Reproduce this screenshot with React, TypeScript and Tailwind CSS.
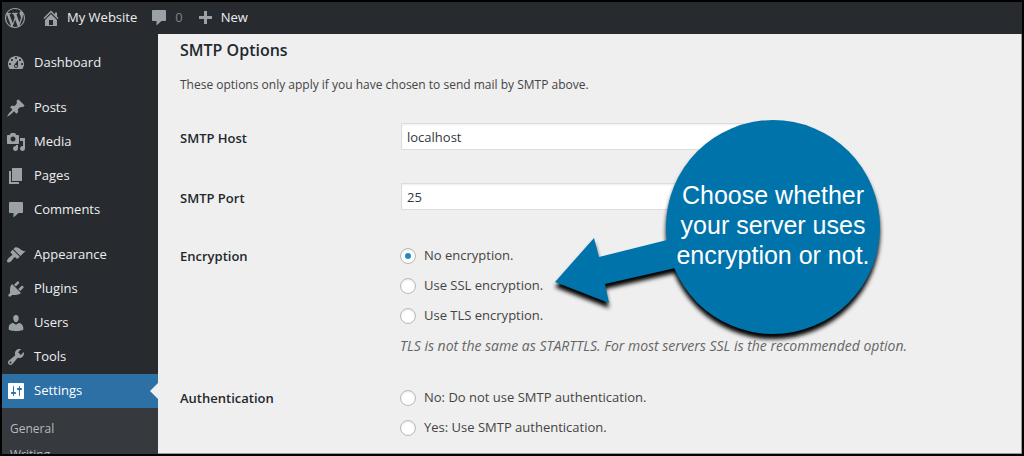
import React, { useState } from 'react';

const ICONS = {
  wordpress:
    'M20 10c0-5.51-4.49-10-10-10C4.48 0 0 4.49 0 10c0 5.52 4.48 10 10 10 5.51 0 10-4.48 10-10zM7.78 15.37L4.37 6.22c.55-.02 1.17-.08 1.17-.08.5-.06.44-1.13-.06-1.11 0 0-1.45.11-2.37.11-.18 0-.37 0-.58-.01C4.12 2.69 6.87 1.11 10 1.11c2.33 0 4.45.87 6.05 2.34-.68-.11-1.65.39-1.65 1.58 0 .74.45 1.36.9 2.1.35.61.55 1.36.55 2.46 0 1.49-1.4 5-1.4 5l-3.03-8.37c.54-.02.82-.17.82-.17.5-.05.44-1.25-.06-1.22 0 0-1.44.12-2.38.12-.87 0-2.33-.12-2.33-.12-.5-.03-.56 1.2-.06 1.22l.92.08 1.26 3.41zM17.41 10c.24-.64.74-1.87.43-4.25.7 1.29 1.05 2.71 1.05 4.25 0 3.29-1.73 6.24-4.4 7.78.97-2.59 1.94-5.2 2.92-7.78zM6.1 18.09C3.12 16.65 1.11 13.53 1.11 10c0-1.3.23-2.48.72-3.59C3.25 10.3 4.67 14.2 6.1 18.09zm4.03-6.63l2.58 6.98c-.86.29-1.76.45-2.71.45-.79 0-1.57-.11-2.29-.33.81-2.38 1.62-4.74 2.42-7.1z',
  home: 'M16 8.5l1.53 1.53-1.06 1.06L10 4.6l-6.47 6.49-1.06-1.06L10 2.5l4 4v-2h2v4zm-6-2.46l6 5.99V18H4v-5.97zM12 17v-5H8v5h4z',
  comment: 'M4 2h12c.55 0 1 .45 1 1v9c0 .55-.45 1-1 1h-3.5L7.5 17.5V13H4c-.55 0-1-.45-1-1V3c0-.55.45-1 1-1z',
  plus: 'M17 8v3h-5v5H9v-5H4V8h5V3h3v5h5z',
  dashboard:
    'M3.76 16h12.48c1.1-1.37 1.76-3.11 1.76-5 0-4.42-3.58-8-8-8s-8 3.58-8 8c0 1.89.66 3.63 1.76 5zM10 4c.55 0 1 .45 1 1s-.45 1-1 1-1-.45-1-1 .45-1 1-1zM6 6c.55 0 1 .45 1 1s-.45 1-1 1-1-.45-1-1 .45-1 1-1zm8 0c.55 0 1 .45 1 1s-.45 1-1 1-1-.45-1-1 .45-1 1-1zm-5.37 5.55L12 7v6c0 1.1-.9 2-2 2s-2-.9-2-2c0-.57.24-1.08.63-1.45zM4 10c.55 0 1 .45 1 1s-.45 1-1 1-1-.45-1-1 .45-1 1-1zm12 0c.55 0 1 .45 1 1s-.45 1-1 1-1-.45-1-1 .45-1 1-1zm-5 3c0-.55-.45-1-1-1s-1 .45-1 1 .45 1 1 1 1-.45 1-1z',
  posts:
    'M10.44 3.02l1.82-1.82 6.36 6.35-1.83 1.82c-1.05-.68-2.48-.57-3.41.36l-.75.75c-.92.93-1.04 2.35-.35 3.41l-1.83 1.82-2.41-2.41-2.8 2.79c-.42.42-3.38 2.71-3.8 2.29s1.86-3.39 2.28-3.81l2.79-2.79L4.1 9.36l1.83-1.82c1.05.69 2.48.57 3.4-.36l.75-.75c.93-.92 1.05-2.35.36-3.41z',
  media:
    'M13 11V4c0-.55-.45-1-1-1h-1.67L9 1H5L3.67 3H2c-.55 0-1 .45-1 1v7c0 .55.45 1 1 1h10c.55 0 1-.45 1-1zM7 4.5c1.38 0 2.5 1.12 2.5 2.5S8.38 9.5 7 9.5 4.5 8.38 4.5 7 5.62 4.5 7 4.5zM14 6h5v10.5c0 1.38-1.12 2.5-2.5 2.5S14 17.88 14 16.5s1.12-2.5 2.5-2.5c.17 0 .34.02.5.05V9h-3V6zm-4 8.05V13h2v3.5c0 1.38-1.12 2.5-2.5 2.5S7 17.88 7 16.5 8.12 14 9.5 14c.17 0 .34.02.5.05z',
  pages: 'M6 15V2h10v13H6zm-1 1h8v2H3V5h2v11z',
  appearance:
    'M14.48 11.06L7.41 3.99l1.5-1.5c.5-.56 2.3-.47 3.51.32 1.21.8 1.43 1.28 2.91 2.1 1.18.64 2.45 1.26 4.45.85zm-.71.71L6.7 4.7 4.93 6.47c-.39.39-.39 1.02 0 1.41l1.06 1.06c.39.39.39 1.03 0 1.42-.6.6-1.43 1.11-2.21 1.69-.35.26-.7.53-1.01.84C1.43 14.23.4 16.08 1.4 17.07c.99 1 2.84-.03 4.18-1.36.31-.31.58-.66.85-1.02.57-.78 1.08-1.61 1.69-2.21.39-.39 1.02-.39 1.41 0l1.06 1.06c.39.39 1.02.39 1.41 0z',
  plugins:
    'M13.11 4.36L9.87 7.6 8 5.73l3.24-3.24c.35-.34 1.05-.2 1.56.32.52.51.66 1.21.31 1.55zm-8 1.77l.91-1.12 9.01 9.01-1.19.84c-.71.71-2.63 1.16-3.82 1.16H6.14L4.9 17.26c-.59.59-1.54.59-2.12 0-.59-.58-.59-1.53 0-2.12l1.24-1.24v-3.88c0-1.13.4-3.19 1.09-3.89zm7.26 3.97l3.24-3.24c.34-.35 1.04-.21 1.55.31.52.51.66 1.21.31 1.55l-3.24 3.25z',
  users:
    'M10 9.25c-2.27 0-2.73-3.44-2.73-3.44C7 4.02 7.82 2 9.97 2c2.16 0 2.98 2.02 2.71 3.81 0 0-.41 3.44-2.68 3.44zm0 2.57L12.72 10c2.39 0 4.52 2.33 4.52 4.53v2.49s-3.65 1.13-7.24 1.13c-3.65 0-7.24-1.13-7.24-1.13v-2.49c0-2.25 1.94-4.48 4.47-4.48z',
  tools:
    'M16.68 9.77c-1.34 1.34-3.3 1.67-4.95.99l-5.41 6.52c-.99.99-2.59.99-3.58 0s-.99-2.59 0-3.57l6.52-5.42c-.68-1.65-.35-3.61.99-4.95 1.28-1.28 3.12-1.62 4.72-1.06l-2.89 2.89 2.82 2.82 2.86-2.87c.53 1.58.18 3.39-1.08 4.65zM3.81 16.21c.4.39 1.04.39 1.43 0 .4-.4.4-1.04 0-1.43-.39-.4-1.03-.4-1.43 0-.39.39-.39 1.03 0 1.43z',
  settings:
    'M18 17V3c0-.55-.45-1-1-1H3c-.55 0-1 .45-1 1v14c0 .55.45 1 1 1h14c.55 0 1-.45 1-1zM8 11h1c.55 0 1 .45 1 1s-.45 1-1 1H8v1.5c0 .28-.22.5-.5.5s-.5-.22-.5-.5V13H6c-.55 0-1-.45-1-1s.45-1 1-1h1V5.5c0-.28.22-.5.5-.5s.5.22.5.5V11zm5-2h-1c-.55 0-1-.45-1-1s.45-1 1-1h1V5.5c0-.28.22-.5.5-.5s.5.22.5.5V7h1c.55 0 1 .45 1 1s-.45 1-1 1h-1v5.5c0 .28-.22.5-.5.5s-.5-.22-.5-.5V9z',
};

type IconName = keyof typeof ICONS;

const Icon: React.FC<{ name: IconName }> = ({ name }) => (
  <svg className="w-5 h-5 shrink-0" viewBox="0 0 20 20" fill="currentColor" aria-hidden="true">
    <path fillRule={name === 'dashboard' ? 'nonzero' : 'evenodd'} d={ICONS[name]} />
  </svg>
);

const MENU: { label: string; icon: IconName }[][] = [
  [{ label: 'Dashboard', icon: 'dashboard' }],
  [
    { label: 'Posts', icon: 'posts' },
    { label: 'Media', icon: 'media' },
    { label: 'Pages', icon: 'pages' },
    { label: 'Comments', icon: 'comment' },
  ],
  [
    { label: 'Appearance', icon: 'appearance' },
    { label: 'Plugins', icon: 'plugins' },
    { label: 'Users', icon: 'users' },
    { label: 'Tools', icon: 'tools' },
    { label: 'Settings', icon: 'settings' },
  ],
];

const AdminBar: React.FC = () => (
  <header className="flex h-8 shrink-0 items-center gap-3 bg-[#272b30] pl-[3px] text-[13px] text-[#eee]">
    <a href="#about" aria-label="About WordPress" className="mr-1 text-[#9ca1a6]">
      <Icon name="wordpress" />
    </a>
    <a href="#site" className="flex items-center gap-1.5">
      <span className="text-[#9ca1a6]"><Icon name="home" /></span>
      My Website
    </a>
    <a href="#comments" className="flex items-center gap-1.5 text-[#9ca1a6]">
      <Icon name="comment" />
      <span className="text-[#7d8287]">0</span>
    </a>
    <a href="#new" className="flex items-center gap-1.5">
      <span className="text-[#9ca1a6]"><Icon name="plus" /></span>
      New
    </a>
  </header>
);

const Sidebar: React.FC = () => (
  <nav className="w-39 shrink-0 bg-[#272b30] pt-3 text-[13px] text-[#eee]">
    <div className="flex flex-col gap-[11px]">
      {MENU.map((group, i) => (
        <ul key={i}>
          {group.map(item => {
            const active = item.label === 'Settings';
            return (
              <li key={item.label}>
                <a
                  href={`#${item.label.toLowerCase()}`}
                  className={
                    active
                      ? 'relative flex h-[34px] items-center gap-2 bg-[#2c70a6] pl-1 text-white'
                      : 'flex h-[34px] items-center gap-2 pl-1'
                  }
                >
                  <span className={active ? 'text-white' : 'text-[#9ca1a6]'}><Icon name={item.icon} /></span>
                  {item.label}
                  {active && (
                    <span className="absolute right-0 top-[9px] border-8 border-l-0 border-transparent border-r-[#efefef]" />
                  )}
                </a>
              </li>
            );
          })}
        </ul>
      ))}
    </div>
    <ul className="bg-[#363a3f] pt-2 pl-2 text-xs leading-[26px] text-[#b4b9be]">
      <li><a href="#general">General</a></li>
      <li><a href="#writing">Writing</a></li>
    </ul>
  </nav>
);

interface RadioProps {
  name: string;
  label: string;
  checked: boolean;
  onChange: () => void;
}

const Radio: React.FC<RadioProps> = ({ name, label, checked, onChange }) => (
  <label className="flex h-[30px] items-center gap-2">
    <input
      type="radio"
      name={name}
      checked={checked}
      onChange={onChange}
      className="grid size-4 shrink-0 appearance-none place-items-center rounded-full border border-[#b4b9be] bg-white shadow-[inset_0_1px_2px_rgba(0,0,0,0.1)] before:size-1.5 before:rounded-full checked:before:bg-[#1e8cbe]"
    />
    {label}
  </label>
);

const Callout: React.FC = () => (
  <div className="pointer-events-none absolute left-[395px] top-[84px] h-[220px] w-[330px]">
    <svg
      className="absolute inset-0 h-full w-full overflow-visible drop-shadow-[0_5px_2px_rgba(0,0,0,1)]"
      viewBox="0 0 330 220"
      fill="#0073aa"
      aria-hidden="true"
    >
      <circle cx="220" cy="109" r="107" />
      <path d="M2 164L41 120L46 139L130 118L140 146L52 166L56 185Z" />
    </svg>
    <p className="absolute right-0 top-[62px] w-[220px] text-center font-['Liberation_Sans',Arial,sans-serif] text-[25px] leading-[30px] text-white">
      Choose whether<br />your server uses<br />encryption or not.
    </p>
  </div>
);

const LABEL = 'text-[13px] leading-[30px] font-semibold text-[#23282d]';
const INPUT =
  'ml-px h-[27px] w-[350px] border border-[#ddd] bg-white px-[5px] text-[13px] text-[#32373c] shadow-[inset_0_1px_2px_rgba(0,0,0,0.07)] outline-none';

const App: React.FC = () => {
  const [host, setHost] = useState('localhost');
  const [port, setPort] = useState('25');
  const [encryption, setEncryption] = useState('none');
  const [auth, setAuth] = useState('');

  return (
    <div className="flex h-screen flex-col overflow-hidden border-2 border-black bg-[#272b30] font-['Open_Sans','Segoe_UI',sans-serif]">
      <AdminBar />
      <div className="flex min-h-0 flex-1">
        <Sidebar />
        <main className="relative min-w-0 flex-1 overflow-hidden border-r border-b border-[#999] bg-[#efefef] pl-[22px] text-[13px] text-[#444]">
          <h2 className="pt-1 text-base leading-6 font-semibold text-[#23282d]">SMTP Options</h2>
          <p className="mt-[13px] text-xs leading-5">These options only apply if you have chosen to send mail by SMTP above.</p>

          <form className="mt-7 grid grid-cols-[220px_1fr] grid-rows-[60px_58px]">
            <label htmlFor="host" className={LABEL}>SMTP Host</label>
            <input id="host" className={INPUT} value={host} onChange={e => setHost(e.target.value)} />

            <label htmlFor="port" className={LABEL}>SMTP Port</label>
            <input id="port" className={INPUT} value={port} onChange={e => setPort(e.target.value)} />

            <span className={LABEL}>Encryption</span>
            <div role="radiogroup" aria-label="Encryption" className="mb-[22px]">
              <Radio name="encryption" label="No encryption." checked={encryption === 'none'} onChange={() => setEncryption('none')} />
              <Radio name="encryption" label="Use SSL encryption." checked={encryption === 'ssl'} onChange={() => setEncryption('ssl')} />
              <Radio name="encryption" label="Use TLS encryption." checked={encryption === 'tls'} onChange={() => setEncryption('tls')} />
              <p className="text-sm leading-[30px] text-[#666] italic">
                TLS is not the same as STARTTLS. For most servers SSL is the recommended option.
              </p>
            </div>

            <span className={LABEL}>Authentication</span>
            <div role="radiogroup" aria-label="Authentication">
              <Radio name="auth" label="No: Do not use SMTP authentication." checked={auth === 'no'} onChange={() => setAuth('no')} />
              <Radio name="auth" label="Yes: Use SMTP authentication." checked={auth === 'yes'} onChange={() => setAuth('yes')} />
            </div>
          </form>

          <Callout />
        </main>
      </div>
    </div>
  );
};

export default App;
